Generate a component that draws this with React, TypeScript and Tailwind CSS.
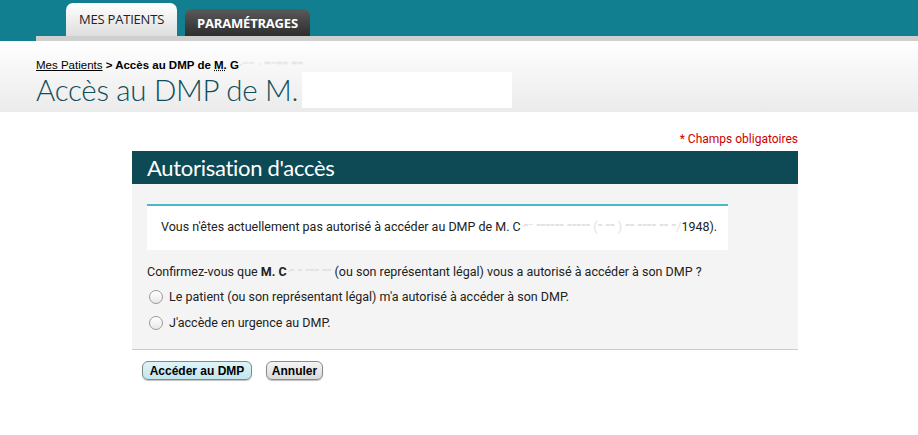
export default function App() {
	return (
		<div className="w-[918px] h-[435px] bg-white font-['Roboto',sans-serif] text-[#222] overflow-hidden">
			{/* top navigation */}
			<div className="bg-[#127f90] pt-[3px]">
				<div className="flex items-end gap-[8px] pl-[66px] h-[33px]">
					<div className="h-[33px] w-[111px] rounded-t-[7px] bg-linear-to-b from-white to-[#dedede] flex items-center justify-center text-[13px] text-[#222] font-['Open_Sans',sans-serif] tracking-[-0.2px]">
						MES PATIENTS
					</div>
					<div className="h-[27px] w-[125px] rounded-t-[7px] bg-linear-to-b from-[#5a5a5a] to-[#2e2e2e] flex items-center justify-center text-[13px] font-bold text-white font-['Open_Sans',sans-serif] tracking-[-0.2px] pt-[2px]">
						PARAMÉTRAGES
					</div>
				</div>
				<div className="ml-[36px] h-[5px] bg-[#cfcfcf]" />
			</div>

			{/* page header */}
			<div className="h-[71px] bg-linear-to-b from-white to-[#ebebeb] px-[36px] pt-[17px]">
				<div className="text-[11.5px] leading-[14px] font-['Liberation_Sans',sans-serif] text-black">
					<span className="underline">Mes Patients</span>
					<span className="font-bold"> &gt; Accès au DMP de </span>
					<span className="font-bold underline decoration-dotted">M.</span>
					<span className="font-bold"> G</span>
					<span className="font-bold text-[#e4e4e4]">ᐧ⁻⁻ ˑ ⁼⁻⁼⁼ ⁼⁼</span>
				</div>
				<div className="flex items-center">
					<span className="text-[29.5px] leading-[36px] font-['Lato',sans-serif] font-light text-[#0f4d5a] tracking-[-0.3px]">
						Accès au DMP de M.
					</span>
					<div className="ml-[4px] w-[210px] h-[36px] bg-white" />
				</div>
			</div>

			{/* form */}
			<div className="ml-[132px] w-[666px]">
				<div className="text-right text-[12px] text-[#cc0000] mt-[20px] leading-[14px]">* Champs obligatoires</div>
				<div className="mt-[5px] h-[33px] bg-[#0d4a55] flex items-center pl-[15px]">
					<span className="text-white text-[22px] font-['Lato',sans-serif] font-normal tracking-[-0.3px]">Autorisation d'accès</span>
				</div>
				<div className="bg-[#f4f4f4] border-b border-[#cccccc] pl-[15px] pt-[20px] h-[166px] text-[12.5px] leading-[14px]">
					<div className="w-[581px] h-[46px] bg-white border-t-2 border-[#4ab8c8] pl-[14px] pt-[14px]">
						Vous n'êtes actuellement pas autorisé à accéder au DMP de M. C
						<span className="text-[#e2e2e2]">ᐧ⁼⁻ ⁼⁼⁼⁼⁼⁼ ⁼⁼⁼⁼⁼ (⁼ ⁼⁼ ) ⁼⁼ ⁼⁼⁼⁼ ⁼⁼ ⁼/</span>1948).
					</div>
					<div className="mt-[15px]">
						Confirmez-vous que <span className="font-bold">M. C</span>
						<span className="text-[#e2e2e2]">ᐧ⁼ ⁼ ⁼⁼⁼ ⁼⁼ </span>
						(ou son représentant légal) vous a autorisé à accéder à son DMP ?
					</div>
					<label className="mt-[11px] flex items-center">
						<span className="ml-[2px] w-[14px] h-[14px] rounded-full border border-[#9a9a9a] bg-linear-to-b from-white to-[#e8e8e8]" />
						<span className="ml-[6px]">Le patient (ou son représentant légal) m'a autorisé à accéder à son DMP.</span>
					</label>
					<label className="mt-[12px] flex items-center">
						<span className="ml-[2px] w-[14px] h-[14px] rounded-full border border-[#9a9a9a] bg-linear-to-b from-white to-[#e8e8e8]" />
						<span className="ml-[6px]">J'accède en urgence au DMP.</span>
					</label>
				</div>
				<div className="flex items-center gap-[14px] mt-[11px] pl-[10px] font-['Liberation_Sans',sans-serif]">
					<button className="h-[19px] w-[110px] rounded-[6px] border border-[#7a8a8e] bg-linear-to-b from-[#dff4f8] to-[#c3e6ee] text-[12px] font-bold text-black shadow-[0_1px_1px_rgba(0,0,0,0.25)]">
						Accéder au DMP
					</button>
					<button className="h-[19px] w-[57px] rounded-[6px] border border-[#8a8a8a] bg-linear-to-b from-[#f4f4f4] to-[#dadada] text-[12px] font-bold text-black shadow-[0_1px_1px_rgba(0,0,0,0.25)]">
						Annuler
					</button>
				</div>
			</div>
		</div>
	);
}
